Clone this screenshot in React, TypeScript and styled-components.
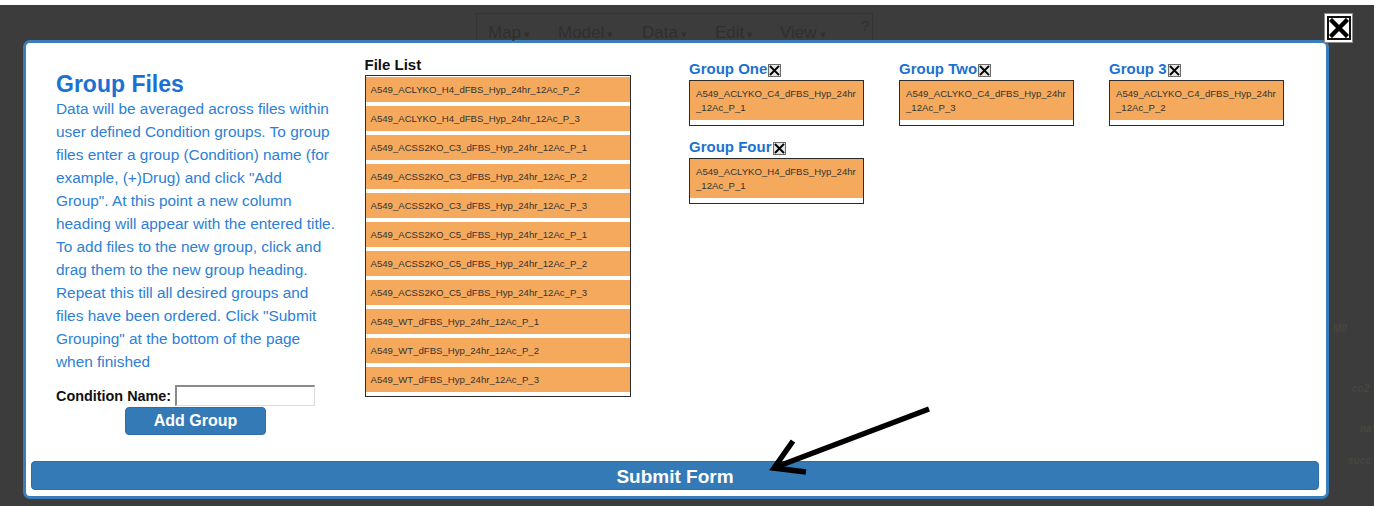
import React from "react";
import styled, { createGlobalStyle } from "styled-components";

const GlobalStyle = createGlobalStyle`
  html, body { margin: 0; padding: 0; background: #ffffff; }
  body { font-family: "Liberation Sans", Arial, sans-serif; }
  * { box-sizing: border-box; }
`;

const Screen = styled.div`
  position: relative;
  width: 1374px;
  height: 501px;
  margin-top: 5px;
  background: #3c3c3c;
  overflow: hidden;
`;

const MenuBar = styled.div`
  display: flex;
  align-items: flex-end;
  margin: 8px 0 0 476px;
  width: 397px;
  height: 27px;
  border-left: 1px solid #343434;
  border-right: 1px solid #343434;
  border-top: 1px solid #353535;
  padding-left: 11px;
`;

const MenuItem = styled.span<{ $w: number }>`
  width: ${(p) => p.$w}px;
  font-size: 17px;
  line-height: 17px;
  color: #2f2f2f;
  white-space: nowrap;
  margin-bottom: -3px;
  &::after {
    content: " ▾";
    font-size: 11px;
  }
`;

const Help = styled.span`
  font-size: 15px;
  color: #303030;
  align-self: flex-start;
  margin-top: 3px;
`;

const Modal = styled.div`
  margin: 0 0 0 23px;
  width: 1306px;
  height: 459px;
  background: #ffffff;
  border: 3px solid #3a7dbd;
  border-radius: 7px;
  padding: 13px 7px 6px 5px;
  display: flex;
  flex-direction: column;
`;

const TopArea = styled.div`
  flex: 1;
  display: flex;
  padding-left: 25px;
`;

const LeftCol = styled.div`
  width: 309px;
  padding-top: 15px;
  display: flex;
  flex-direction: column;
`;

const Title = styled.h1`
  margin: 0;
  font-size: 23px;
  line-height: 26px;
  font-weight: bold;
  color: #1b71d1;
`;

const Intro = styled.p`
  margin: 0;
  width: 281px;
  font-size: 15.4px;
  line-height: 23px;
  color: #2c80d6;
`;

const ConditionRow = styled.div`
  display: flex;
  align-items: center;
  gap: 4px;
  margin-top: 12px;
`;

const Label = styled.label`
  font-size: 14.4px;
  font-weight: bold;
  color: #111;
`;

const NameInput = styled.input`
  width: 140px;
  height: 21px;
  border: 1px solid;
  border-color: #8a8a8a #dcdcdc #dcdcdc #8a8a8a;
  border-width: 2px 1px 1px 2px;
  padding: 0;
  background: #fff;
`;

const AddButton = styled.button`
  margin: 1px 0 0 69px;
  width: 141px;
  height: 28px;
  border: 1px solid #2f6ea6;
  border-radius: 4px;
  background: #337ab7;
  color: #fff;
  font-family: "Liberation Sans", Arial, sans-serif;
  font-size: 16px;
  font-weight: bold;
  padding: 0;
`;

const FileCol = styled.div`
  width: 325px;
`;

const ColTitle = styled.div`
  font-size: 15px;
  line-height: 17px;
  font-weight: bold;
  color: #111;
  margin-bottom: 2px;
`;

const FileBox = styled.div`
  width: 266px;
  border: 1px solid #2b2b2b;
  padding-top: 1px;
  background: #fff;
`;

const FileItem = styled.div`
  height: 25px;
  margin-bottom: 4px;
  background: #f5a95d;
  padding-left: 5px;
  font-size: 9.6px;
  line-height: 25px;
  color: #333;
  white-space: nowrap;
`;

const GroupsGrid = styled.div`
  display: grid;
  grid-template-columns: repeat(3, 210px);
  row-gap: 12px;
  align-content: start;
  padding-top: 4px;
`;

const Group = styled.div`
  width: 175px;
`;

const GroupTitle = styled.div`
  display: flex;
  align-items: flex-end;
  font-size: 15px;
  line-height: 18px;
  font-weight: bold;
  color: #1b71d1;
  margin-bottom: 2px;
`;

const SmallX = styled.span`
  display: inline-flex;
  width: 13px;
  height: 13px;
  margin: 0 0 1px 1px;
  background: #e6e6e6;
  border: 1px solid #6d6d6d;
  align-items: center;
  justify-content: center;
`;

const GroupBox = styled.div`
  border: 1px solid #2b2b2b;
  padding-bottom: 5px;
  background: #fff;
`;

const GroupItem = styled.div`
  background: #f5a95d;
  padding: 6px 5px 5px 6px;
  font-size: 9.6px;
  line-height: 14px;
  color: #333;
  word-break: break-all;
`;

const SubmitBar = styled.button`
  height: 29px;
  width: 100%;
  border: 1px solid #2f6ea6;
  border-radius: 4px;
  background: #337ab7;
  color: #fff;
  font-family: "Liberation Sans", Arial, sans-serif;
  font-size: 19px;
  font-weight: bold;
  padding: 2px 0 0;
`;

const CloseButton = styled.button`
  position: absolute;
  top: 8px;
  left: 1324px;
  width: 29px;
  height: 30px;
  padding: 2px;
  background: #fff;
  border: 1px solid #8a8a8a;
  display: flex;
`;

const CloseInner = styled.span`
  flex: 1;
  border: 2px solid #111;
  display: flex;
  align-items: center;
  justify-content: center;
`;

const ArrowLayer = styled.svg`
  position: absolute;
  left: 0;
  top: 0;
  pointer-events: none;
`;

const Faint = styled.span<{ $x: number; $y: number }>`
  position: absolute;
  left: ${(p) => p.$x}px;
  top: ${(p) => p.$y}px;
  font-size: 10px;
  font-style: italic;
  font-weight: bold;
  color: #4a4540;
`;

const files = [
  "A549_ACLYKO_H4_dFBS_Hyp_24hr_12Ac_P_2",
  "A549_ACLYKO_H4_dFBS_Hyp_24hr_12Ac_P_3",
  "A549_ACSS2KO_C3_dFBS_Hyp_24hr_12Ac_P_1",
  "A549_ACSS2KO_C3_dFBS_Hyp_24hr_12Ac_P_2",
  "A549_ACSS2KO_C3_dFBS_Hyp_24hr_12Ac_P_3",
  "A549_ACSS2KO_C5_dFBS_Hyp_24hr_12Ac_P_1",
  "A549_ACSS2KO_C5_dFBS_Hyp_24hr_12Ac_P_2",
  "A549_ACSS2KO_C5_dFBS_Hyp_24hr_12Ac_P_3",
  "A549_WT_dFBS_Hyp_24hr_12Ac_P_1",
  "A549_WT_dFBS_Hyp_24hr_12Ac_P_2",
  "A549_WT_dFBS_Hyp_24hr_12Ac_P_3",
];

const groups = [
  { name: "Group One", file: "A549_ACLYKO_C4_dFBS_Hyp_24hr_12Ac_P_1" },
  { name: "Group Two", file: "A549_ACLYKO_C4_dFBS_Hyp_24hr_12Ac_P_3" },
  { name: "Group 3", file: "A549_ACLYKO_C4_dFBS_Hyp_24hr_12Ac_P_2" },
  { name: "Group Four", file: "A549_ACLYKO_H4_dFBS_Hyp_24hr_12Ac_P_1" },
];

const XGlyph = ({ size, w }: { size: number; w: number }) => (
  <svg width={size} height={size} viewBox="0 0 10 10">
    <path d="M1.5 1.5 L8.5 8.5 M8.5 1.5 L1.5 8.5" stroke="#000" strokeWidth={w} strokeLinecap="square" />
  </svg>
);

export default function App() {
  return (
    <>
      <GlobalStyle />
      <Screen>
        <MenuBar>
          <MenuItem $w={70}>Map</MenuItem>
          <MenuItem $w={84}>Model</MenuItem>
          <MenuItem $w={73}>Data</MenuItem>
          <MenuItem $w={65}>Edit</MenuItem>
          <MenuItem $w={81}>View</MenuItem>
          <Help>?</Help>
        </MenuBar>
        <Faint $x={1333} $y={318}>M0</Faint>
        <Faint $x={1352} $y={378}>co2</Faint>
        <Faint $x={1360} $y={418}>na</Faint>
        <Faint $x={1348} $y={450}>succ</Faint>
        <Modal>
          <TopArea>
            <LeftCol>
              <Title>Group Files</Title>
              <Intro>
                Data will be averaged across files within user defined Condition groups. To group
                files enter a group (Condition) name (for example, (+)Drug) and click "Add
                Group". At this point a new column heading will appear with the entered title.
                To add files to the new group, click and drag them to the new group heading.
                Repeat this till all desired groups and files have been ordered. Click "Submit
                Grouping" at the bottom of the page when finished
              </Intro>
              <ConditionRow>
                <Label htmlFor="cond">Condition Name:</Label>
                <NameInput id="cond" />
              </ConditionRow>
              <AddButton>Add Group</AddButton>
            </LeftCol>
            <FileCol>
              <ColTitle>File List</ColTitle>
              <FileBox>
                {files.map((f) => (
                  <FileItem key={f}>{f}</FileItem>
                ))}
              </FileBox>
            </FileCol>
            <GroupsGrid>
              {groups.map((g) => (
                <Group key={g.name}>
                  <GroupTitle>
                    {g.name}
                    <SmallX>
                      <XGlyph size={11} w={1.8} />
                    </SmallX>
                  </GroupTitle>
                  <GroupBox>
                    <GroupItem>{g.file}</GroupItem>
                  </GroupBox>
                </Group>
              ))}
            </GroupsGrid>
          </TopArea>
          <SubmitBar>Submit Form</SubmitBar>
        </Modal>
        <CloseButton aria-label="close">
          <CloseInner>
            <XGlyph size={20} w={2.2} />
          </CloseInner>
        </CloseButton>
        <ArrowLayer width={1374} height={501}>
          <path d="M929 404 L776 462" stroke="#000" strokeWidth={5.5} strokeLinecap="butt" />
          <path d="M793 436 L774 463 L806 467" stroke="#000" strokeWidth={5.5} fill="none" strokeLinejoin="miter" strokeLinecap="butt" />
        </ArrowLayer>
      </Screen>
    </>
  );
}
